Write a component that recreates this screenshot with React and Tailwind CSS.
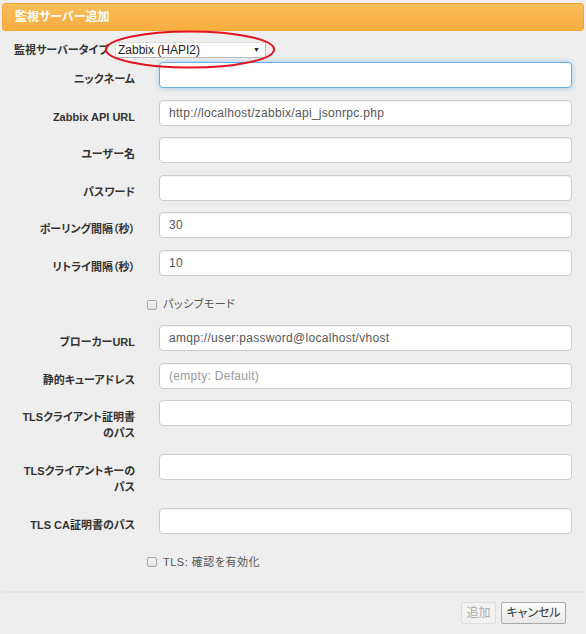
import React from 'react';

const font = "font-['Liberation_Sans','Noto_Sans_CJK_JP',sans-serif] [font-feature-settings:'palt']";

function Field({ label, value, placeholder, focus }) {
  return (
    <div className="flex items-start">
      <label className="w-[135px] shrink-0 text-right text-[11px] font-bold leading-[16px] pt-[9px] text-[#333]">
        {label}
      </label>
      <input
        readOnly
        value={value || ''}
        placeholder={placeholder}
        className={`ml-[24px] w-[413px] h-[26px] rounded-[4px] bg-white pl-[9px] pr-[10px] text-[12px] tracking-[0.3px] text-[#555] placeholder:text-[#999] outline-none border ${
          focus ? 'border-[#66afe9] shadow-[0_0_5px_rgba(102,175,233,0.6)]' : 'border-[#ccc] shadow-[inset_0_1px_1px_rgba(0,0,0,0.05)]'
        }`}
      />
    </div>
  );
}

function TwoLine({ lines }) {
  return (
    <div className="flex items-start">
      <label className="w-[135px] shrink-0 text-right text-[11px] font-bold leading-[16px] pt-[9px] pb-[1px] text-[#333]">
        {lines.map((l, i) => <div key={i}>{l}</div>)}
      </label>
      <input readOnly className="ml-[24px] w-[413px] h-[26px] rounded-[4px] bg-white border border-[#ccc] outline-none" />
    </div>
  );
}

function Check({ text }) {
  return (
    <div className="flex items-center h-[26px] pt-[8px] pl-[147px]">
      <span className="w-[10px] h-[10px] rounded-[2px] border border-[#aaa] bg-[linear-gradient(#f4f4f4,#e2e2e2)]" />
      <span className="ml-[6px] text-[11px] text-[#555] tracking-[0.5px]">{text}</span>
    </div>
  );
}

export default function App() {
  return (
    <div className={`relative w-[586px] h-[634px] bg-[#eee] overflow-hidden ${font}`}>
      <div className="mx-[2px] mt-[3px] h-[28px] rounded-[3px] border border-[#f3a537] bg-[linear-gradient(#f9bd5c,#f7ad3f)] flex items-center pl-[12px]">
        <span className="text-white text-[12px] font-bold">監視サーバー追加</span>
      </div>

      <div className="mt-[11px] flex items-center h-[16px]">
        <span className="pl-[14px] w-[115px] shrink-0 whitespace-nowrap text-[11px] font-bold text-[#333]">監視サーバータイプ</span>
        <div className="relative w-[151px] h-[16px] bg-white border border-[#bbb] border-t-[#ddd] border-l-[#ddd] flex items-center justify-between pl-[2px] pr-[5px]">
          <span className="text-[12px] text-[#222]">Zabbix (HAPI2)</span>
          <span className="text-[7px] text-[#222]">▼</span>
        </div>
      </div>

      <div className="mt-[4px] flex flex-col gap-[11.6px]">
        <Field label="ニックネーム" focus />
        <Field label="Zabbix API URL" value="http://localhost/zabbix/api_jsonrpc.php" />
        <Field label="ユーザー名" />
        <Field label="パスワード" />
        <Field label="ポーリング間隔（秒）" value="30" />
        <Field label="リトライ間隔（秒）" value="10" />
        <Check text="パッシブモード" />
        <Field label="ブローカーURL" value="amqp://user:password@localhost/vhost" />
        <Field label="静的キューアドレス" placeholder="(empty: Default)" />
        <TwoLine lines={['TLSクライアント証明書', 'のパス']} />
        <TwoLine lines={['TLSクライアントキーの', 'パス']} />
        <Field label="TLS CA証明書のパス" />
        <Check text="TLS: 確認を有効化" />
      </div>

      <div className="mx-[2px] mt-[20px] border-t-2 border-[#e3e3e3]" />
      <div className="flex justify-end gap-[5px] pr-[20px] pt-[9px]">
        <button className="h-[22px] w-[35px] rounded-[2px] border border-[#ddd] bg-[#f2f2f2] text-[12px] text-[#aaa]">追加</button>
        <button className="h-[22px] w-[65px] rounded-[2px] border border-[#aaa] bg-[linear-gradient(#fdfdfd,#e8e8e8)] text-[12px] text-[#333]">キャンセル</button>
      </div>

      <svg className="absolute left-0 top-0 pointer-events-none" width="586" height="634">
        <ellipse cx="190" cy="49.5" rx="84" ry="18" fill="none" stroke="#e0141e" strokeWidth="2" />
      </svg>
    </div>
  );
}
